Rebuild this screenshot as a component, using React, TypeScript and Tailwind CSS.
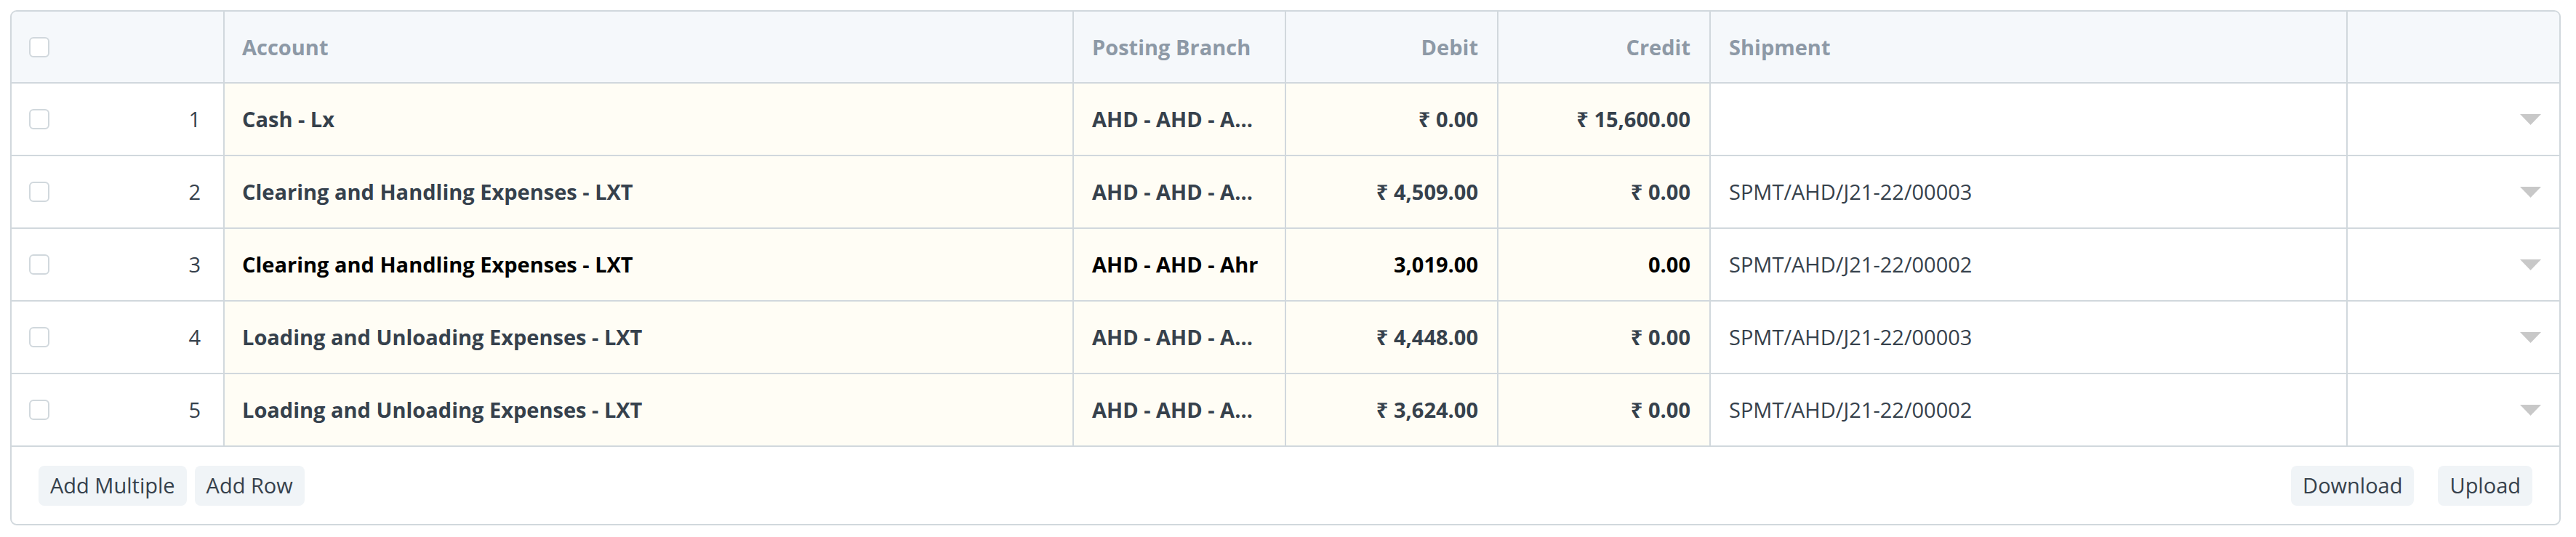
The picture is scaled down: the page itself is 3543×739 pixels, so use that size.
import React from "react";

type Row = {
  n: number;
  account: string;
  branch: string;
  debit: string;
  credit: string;
  ship: string;
  editing?: boolean;
};

const rows: Row[] = [
  { n: 1, account: "Cash - Lx", branch: "AHD - AHD - A...", debit: "₹ 0.00", credit: "₹ 15,600.00", ship: "" },
  { n: 2, account: "Clearing and Handling Expenses - LXT", branch: "AHD - AHD - A...", debit: "₹ 4,509.00", credit: "₹ 0.00", ship: "SPMT/AHD/J21-22/00003" },
  { n: 3, account: "Clearing and Handling Expenses - LXT", branch: "AHD - AHD - Ahr", debit: "3,019.00", credit: "0.00", ship: "SPMT/AHD/J21-22/00002", editing: true },
  { n: 4, account: "Loading and Unloading Expenses - LXT", branch: "AHD - AHD - A...", debit: "₹ 4,448.00", credit: "₹ 0.00", ship: "SPMT/AHD/J21-22/00003" },
  { n: 5, account: "Loading and Unloading Expenses - LXT", branch: "AHD - AHD - A...", debit: "₹ 3,624.00", credit: "₹ 0.00", ship: "SPMT/AHD/J21-22/00002" },
];

const grid = "grid grid-cols-[293px_1168px_292px_292px_292px_876px_1fr]";

function Checkbox() {
  return <div className="w-[28px] h-[28px] rounded-[6px] border-2 border-[#d1d8dd] bg-white shrink-0" />;
}

function Caret() {
  return (
    <svg width="29" height="15" viewBox="0 0 29 15">
      <polygon points="0,0 29,0 14.5,15" fill="#c8c8c8" />
    </svg>
  );
}

export default function App() {
  return (
    <div
      className="min-h-screen bg-white pt-[14px] pl-[14px] pr-[21px]"
      style={{ fontFamily: '"Open Sans", "Noto Sans", sans-serif' }}
    >
      <div className="border-2 border-[#d1d8dd] rounded-[9px] overflow-hidden">
        {/* header */}
        <div className={`${grid} h-[99px] bg-[#f5f8fb] border-b-2 border-[#d1d8dd] text-[29px] font-bold text-[#8d99a6]`}>
          <div className="flex items-center pl-[24px] border-r-2 border-[#d1d8dd]">
            <Checkbox />
          </div>
          <div className="flex items-center px-[24px] border-r-2 border-[#d1d8dd]">Account</div>
          <div className="flex items-center px-[25px] border-r-2 border-[#d1d8dd]">Posting Branch</div>
          <div className="flex items-center justify-end px-[26px] border-r-2 border-[#d1d8dd]">Debit</div>
          <div className="flex items-center justify-end px-[26px] border-r-2 border-[#d1d8dd]">Credit</div>
          <div className="flex items-center px-[25px] border-r-2 border-[#d1d8dd]">Shipment</div>
          <div />
        </div>
        {/* rows */}
        {rows.map((r) => {
          const strong = r.editing ? "text-black" : "text-[#36414c]";
          return (
            <div key={r.n} className={`${grid} h-[100px] border-b-2 border-[#d1d8dd] text-[29px]`}>
              <div className="flex items-center justify-between pl-[24px] pr-[31px] border-r-2 border-[#d1d8dd] bg-white">
                <Checkbox />
                <span className="text-[#36414c]">{r.n}</span>
              </div>
              <div className={`flex items-center px-[24px] border-r-2 border-[#d1d8dd] bg-[#fffdf5] font-bold ${strong}`}>
                <span className="whitespace-nowrap">{r.account}</span>
              </div>
              <div className={`flex items-center px-[25px] border-r-2 border-[#d1d8dd] bg-[#fffdf5] font-bold ${strong}`}>
                <span className="whitespace-nowrap">{r.branch}</span>
              </div>
              <div className={`flex items-center justify-end px-[26px] border-r-2 border-[#d1d8dd] bg-[#fffdf5] font-bold ${strong}`}>
                <span className="whitespace-nowrap">{r.debit}</span>
              </div>
              <div className={`flex items-center justify-end px-[26px] border-r-2 border-[#d1d8dd] bg-[#fffdf5] font-bold ${strong}`}>
                <span className="whitespace-nowrap">{r.credit}</span>
              </div>
              <div className="flex items-center px-[25px] border-r-2 border-[#d1d8dd] bg-white text-[#36414c]">
                <span className="whitespace-nowrap">{r.ship}</span>
              </div>
              <div className="flex items-center justify-end pr-[25px] bg-white">
                <Caret />
              </div>
            </div>
          );
        })}
        {/* footer */}
        <div className="h-[106px] flex items-center justify-between px-[37px] text-[29px] text-[#36414c]">
          <div className="flex items-center gap-[11px]">
            <button className="h-[55px] px-[16px] rounded-[8px] bg-[#f0f4f7]">Add Multiple</button>
            <button className="h-[55px] px-[16px] rounded-[8px] bg-[#f0f4f7]">Add Row</button>
          </div>
          <div className="flex items-center gap-[33px]">
            <button className="h-[55px] px-[16px] rounded-[8px] bg-[#f0f4f7]">Download</button>
            <button className="h-[55px] px-[16px] rounded-[8px] bg-[#f0f4f7]">Upload</button>
          </div>
        </div>
      </div>
    </div>
  );
}
